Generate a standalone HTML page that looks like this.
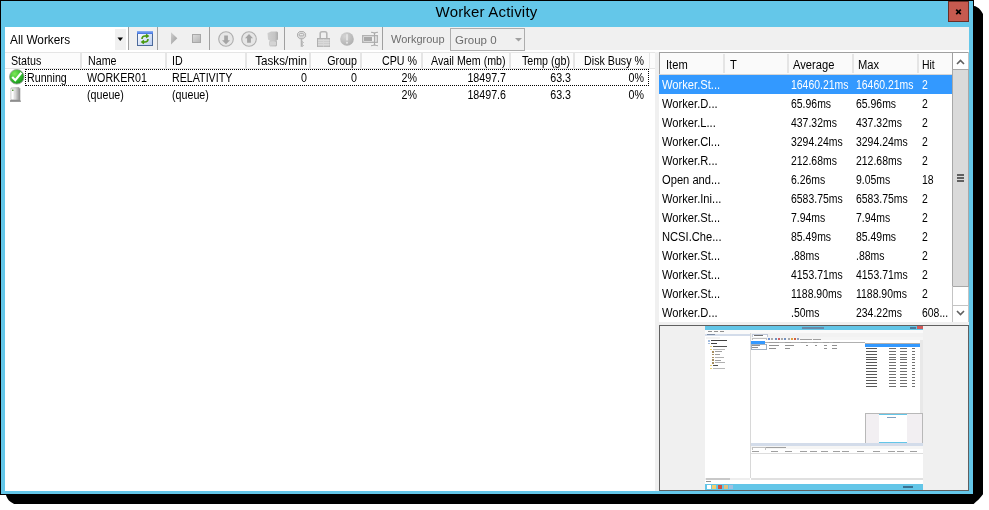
<!DOCTYPE html>
<html><head><meta charset="utf-8">
<style>
html,body{margin:0;padding:0;}
body{width:989px;height:510px;position:relative;overflow:hidden;background:#fff;font-family:"Liberation Sans",sans-serif;font-size:11px;color:#000;}
.a{position:absolute;}
.t{position:absolute;white-space:nowrap;line-height:14px;font-size:12px;transform:scaleX(0.89);transform-origin:0 0;filter:grayscale(1);}
.n{transform:none;}
.s{transform:scaleX(0.93);}
.m{transform:scaleX(0.87);}
.r{text-align:right;transform-origin:100% 0;}
#shadow{left:0;top:0;width:989px;height:510px;}
#win{left:0;top:0;width:972px;height:493px;border:1px solid #000;background:#64c7e9;}
#title{left:0;top:3px;width:973px;text-align:center;font-size:15px;line-height:17px;letter-spacing:0.2px;}
#close{left:948px;top:1px;width:19px;height:19px;background:#c65a4f;border:1px solid #6a2e26;}
#content{left:5px;top:27px;width:964px;height:464px;background:#f0f0f0;}
.sep{position:absolute;top:27px;width:1px;height:23px;background:#a0a0a0;}
.hdrL{position:absolute;top:52px;height:15px;background:#fcfcfc;border-top:1px solid #e5e5e5;border-bottom:1px solid #e5e5e5;}
.vdiv{position:absolute;width:2px;background:#e5e5e5;}
.row{position:absolute;left:659px;width:293px;height:19px;}
</style></head><body>
<svg class="a" id="shadow" width="989" height="510" viewBox="0 0 989 510">
  <path d="M973 5.8 L975.5 6.2 L978.8 8.3 L981 10.8 L983 14 L983 494.3 L980.8 497 L978.4 499.8 L976 501.7 L973.7 504 L14.1 504 L10.8 501.9 L8.9 500.5 L7.8 499 L6.6 496.7 L5.9 494.8 L6 490 L973 490 Z" fill="#000"/>
</svg>
<div class="a" id="win"></div>
<div class="t n" id="title">Worker Activity</div>
<div class="a" id="close"><svg width="19" height="19" viewBox="0 0 19 19" style="position:absolute;left:0;top:0"><path d="M7.2 7.6 L11.8 12.2 M11.8 7.6 L7.2 12.2" stroke="#000" stroke-width="1.7" fill="none"/></svg></div>
<div class="a" id="content"></div>

<!-- toolbar -->
<div class="a" style="left:5px;top:27px;width:123px;height:23px;background:#fff;"></div>
<div class="a" style="left:115px;top:29px;width:11px;height:21px;background:#f0f0f0;"></div>
<svg class="a" style="left:117px;top:37px" width="7" height="5"><path d="M0.5 0.5 L6 0.5 L3.25 4 Z" fill="#000"/></svg>
<div class="t" style="left:10px;top:33px;font-size:12px;line-height:14px;transform:scaleX(0.985);">All Workers</div>
<div class="sep" style="left:128px"></div>
<div class="sep" style="left:157px"></div>
<div class="sep" style="left:209px"></div>
<div class="sep" style="left:284px"></div>
<div class="sep" style="left:382px"></div>
<div class="a" style="left:5px;top:50px;width:964px;height:2px;background:#fff;"></div>

<!-- refresh icon -->
<svg class="a" style="left:137px;top:31px" width="16" height="15" viewBox="0 0 16 15">
  <defs><linearGradient id="rg" x1="0" y1="0" x2="1" y2="1"><stop offset="0" stop-color="#fff"/><stop offset="1" stop-color="#b9cdf2"/></linearGradient>
  <linearGradient id="tg" x1="0" y1="0" x2="0" y2="1"><stop offset="0" stop-color="#8fb4f5"/><stop offset="1" stop-color="#3d6fe0"/></linearGradient></defs>
  <rect x="0.5" y="0.5" width="15" height="14" fill="url(#rg)" stroke="#4d6a9a"/>
  <rect x="0" y="0" width="16" height="3" fill="url(#tg)"/>
  <path d="M5 8 A3 3 0 0 1 8 5 L10 5 M9 3.5 L11 5 L9 6.5 M11 8 A3 3 0 0 1 8 11 L6 11 M7 9.5 L5 11 L7 12.5" stroke="#4a9a10" stroke-width="1.6" fill="none"/>
</svg>
<!-- play -->
<svg class="a" style="left:170px;top:32px" width="9" height="13" viewBox="0 0 9 13"><defs><linearGradient id="pg" x1="0" y1="0" x2="1" y2="1"><stop offset="0" stop-color="#d0d0d0"/><stop offset="1" stop-color="#9a9a9a"/></linearGradient></defs><path d="M1 0.3 L7.3 6.3 L1 12.5 Z" fill="url(#pg)"/></svg>
<!-- stop -->
<svg class="a" style="left:192px;top:34px" width="9" height="9" viewBox="0 0 9 9"><defs><linearGradient id="stg" x1="0" y1="0" x2="1" y2="1"><stop offset="0" stop-color="#dcdcdc"/><stop offset="1" stop-color="#b4b4b4"/></linearGradient></defs><rect x="0.5" y="0.5" width="8" height="8" fill="url(#stg)" stroke="#a8a8a8"/></svg>
<!-- down circle -->
<svg class="a" style="left:218px;top:31px" width="16" height="16" viewBox="0 0 16 16"><circle cx="8" cy="8" r="7.3" fill="#e6e6e6" stroke="#aeaeae" stroke-width="1.1"/><path d="M6.2 4.6 L9.9 4.6 L9.9 9.2 L12 9.2 L8 13.2 L4 9.2 L6.2 9.2 Z" fill="#a4a4a4"/></svg>
<!-- up circle -->
<svg class="a" style="left:241px;top:31px" width="16" height="16" viewBox="0 0 16 16"><circle cx="8" cy="8" r="7.3" fill="#e6e6e6" stroke="#aeaeae" stroke-width="1.1"/><path d="M6.1 11.8 L9.9 11.8 L9.9 7.2 L12 7.2 L8 2.9 L4 7.2 L6.1 7.2 Z" fill="#a4a4a4"/></svg>
<!-- gray blob -->
<svg class="a" style="left:267px;top:31px" width="12" height="16" viewBox="0 0 12 16">
<defs><linearGradient id="bg1" x1="0" y1="0" x2="1" y2="0"><stop offset="0" stop-color="#cfcfcf"/><stop offset="0.7" stop-color="#c4c4c4"/><stop offset="1" stop-color="#a9a9a9"/></linearGradient></defs>
<path d="M4 0.5 L10 0.5 L11 1.5 L11 8.5 L9.5 9.5 L10 10.5 L10 14.5 L9 15.5 L3 15.5 L2 14 L2 11 L2.8 9.5 L1 8.5 L0.5 2 L2 1.5 Z" fill="url(#bg1)"/>
<path d="M3 11 Q6 9.5 9 11 L9 14 L3 14 Z" fill="#d4d4d4"/>
</svg>
<!-- key -->
<svg class="a" style="left:297px;top:31px" width="10" height="17" viewBox="0 0 10 17"><path d="M2.5 0.5 L6.5 0.5 L8.6 2.5 L8.6 5.5 L6.5 7.7 L2.5 7.7 L0.5 5.5 L0.5 2.5 Z" fill="#d8d8d8" stroke="#b0b0b0" stroke-width="1"/><rect x="2.3" y="2.6" width="4.4" height="2.2" rx="1" fill="#ececec" stroke="#a8a8a8" stroke-width="0.9"/><path d="M4.5 7.5 L4.5 15.8" stroke="#b4b4b4" stroke-width="1.6"/><path d="M5 10.5 L6.5 11.5 L5 12.5 M5 13.5 L6.5 14.5 L5 15.5" stroke="#b4b4b4" stroke-width="1" fill="none"/></svg>
<!-- lock -->
<svg class="a" style="left:317px;top:31px" width="13" height="16" viewBox="0 0 13 16"><path d="M3.2 7.5 L3.2 2.5 Q3.2 0.8 5 0.8 L8 0.8 Q9.8 0.8 9.8 2.5 L9.8 7.5" fill="none" stroke="#b6b6b6" stroke-width="1.6"/><rect x="0.5" y="7.5" width="12.5" height="8.3" fill="#cdcdcd" stroke="#b0b0b0" stroke-width="1"/><path d="M1 9.6 H12.5 M1 11.6 H12.5 M1 13.6 H12.5" stroke="#dcdcdc" stroke-width="0.9"/><path d="M6.5 8 V15.5" stroke="#d8d8d8" stroke-width="0.8"/></svg>
<!-- exclamation -->
<svg class="a" style="left:340px;top:32px" width="14" height="14" viewBox="0 0 14 14"><defs><radialGradient id="eg" cx="0.35" cy="0.3" r="0.8"><stop offset="0" stop-color="#d4d4d4"/><stop offset="1" stop-color="#adadad"/></radialGradient></defs><circle cx="7" cy="7" r="6.8" fill="url(#eg)"/><rect x="6" y="2.2" width="2" height="6.3" fill="#e2e2e2"/><rect x="6" y="9.8" width="2" height="1.8" fill="#e2e2e2"/></svg>
<!-- rename -->
<svg class="a" style="left:361px;top:31px" width="18" height="16" viewBox="0 0 18 16">
<rect x="1.7" y="4.7" width="14.6" height="6.6" fill="none" stroke="#b2b2b2" stroke-width="1.4"/>
<rect x="3" y="6" width="8" height="4" fill="#a9a9a9"/>
<rect x="14" y="5.5" width="1.6" height="5" fill="#dedede"/>
<path d="M13.5 1.2 L13.5 14.8 M10 1.3 Q12.5 1.3 13.5 2.5 Q14.5 1.3 17 1.3 M10 14.7 Q12.5 14.7 13.5 13.5 Q14.5 14.7 17 14.7" stroke="#aaaaaa" stroke-width="1.1" fill="none"/>
</svg>

<div class="t n" style="left:391px;top:33px;font-size:11px;line-height:13px;color:#6d6d6d;">Workgroup</div>
<div class="a" style="left:450px;top:28px;width:73px;height:21px;border:1px solid #adadad;background:#f0f0f0;"></div>
<div class="t n" style="left:455px;top:33px;font-size:11.5px;line-height:14px;color:#6d6d6d;">Group 0</div>
<svg class="a" style="left:515px;top:38px" width="7" height="4"><path d="M0 0 L7 0 L3.5 3.5 Z" fill="#a0a0a0"/></svg>

<!-- left list -->
<div class="a" style="left:5px;top:52px;width:650px;height:439px;background:#fff;"></div>
<div class="hdrL" style="left:5px;width:644px;border-right:1px solid #e5e5e5;"></div>
<div class="hdrL" style="left:650px;width:5px;"></div>
<div class="vdiv" style="left:80px;top:53px;height:15px"></div>
<div class="vdiv" style="left:165px;top:53px;height:15px"></div>
<div class="vdiv" style="left:245px;top:53px;height:15px"></div>
<div class="vdiv" style="left:309px;top:53px;height:15px"></div>
<div class="vdiv" style="left:360px;top:53px;height:15px"></div>
<div class="vdiv" style="left:421px;top:53px;height:15px"></div>
<div class="vdiv" style="left:509px;top:53px;height:15px"></div>
<div class="vdiv" style="left:573px;top:53px;height:15px"></div>

<div class="t" style="left:11px;top:54px">Status</div>
<div class="t" style="left:88px;top:54px">Name</div>
<div class="t" style="left:172px;top:54px">ID</div>
<div class="t r" style="left:246px;width:61px;top:54px;transform:scaleX(0.97)">Tasks/min</div>
<div class="t r" style="left:310px;width:47px;top:54px">Group</div>
<div class="t r" style="left:361px;width:56px;top:54px">CPU %</div>
<div class="t r" style="left:422px;width:82px;top:54px">Avail Mem (mb)</div>
<div class="t r" style="left:510px;width:60px;top:54px">Temp (gb)</div>
<div class="t r" style="left:574px;width:70px;top:54px">Disk Busy %</div>

<div class="a" style="left:25px;top:69px;width:622px;height:15px;border:1px dotted #000;"></div>
<!-- check icon -->
<svg class="a" style="left:9px;top:69px" width="16" height="16" viewBox="0 0 16 16">
  <defs><radialGradient id="cg" cx="0.35" cy="0.3" r="0.8"><stop offset="0" stop-color="#7ee85a"/><stop offset="0.6" stop-color="#2fb52a"/><stop offset="1" stop-color="#14881a"/></radialGradient></defs>
  <circle cx="7.8" cy="7.8" r="7.3" fill="url(#cg)" stroke="#9a9a9a" stroke-width="0.8"/>
  <path d="M3.2 8 L6.3 11.2 L12.4 3.8" stroke="#fff" stroke-width="2.2" fill="none"/>
</svg>
<div class="t" style="left:27px;top:71px">Running</div>
<div class="t" style="left:87px;top:71px">WORKER01</div>
<div class="t" style="left:172px;top:71px">RELATIVITY</div>
<div class="t r" style="left:246px;width:61px;top:71px">0</div>
<div class="t r" style="left:310px;width:47px;top:71px">0</div>
<div class="t r" style="left:361px;width:56px;top:71px">2%</div>
<div class="t r" style="left:422px;width:84px;top:71px">18497.7</div>
<div class="t r" style="left:510px;width:61px;top:71px">63.3</div>
<div class="t r" style="left:574px;width:70px;top:71px">0%</div>
<!-- server icon -->
<svg class="a" style="left:9px;top:87px" width="13" height="15" viewBox="0 0 13 15">
  <defs><linearGradient id="sg" x1="0" y1="0" x2="1" y2="0"><stop offset="0" stop-color="#f8f8f8"/><stop offset="0.5" stop-color="#d8d8d8"/><stop offset="1" stop-color="#8a8a8a"/></linearGradient></defs>
  <path d="M2 1 L10 0.5 L11 1.5 L11 13 L2 13 Z" fill="url(#sg)" stroke="#9a9a9a" stroke-width="0.6"/>
  <rect x="2.5" y="2" width="2" height="10" fill="#fff"/>
  <rect x="3" y="2.5" width="1.5" height="1.5" fill="#5a9a3a"/>
  <path d="M1 13.5 L11.5 13.5 L12 14.5 L1 14.5 Z" fill="#3a3a3a"/>
</svg>
<div class="t" style="left:87px;top:88px">(queue)</div>
<div class="t" style="left:172px;top:88px">(queue)</div>
<div class="t r" style="left:361px;width:56px;top:88px">2%</div>
<div class="t r" style="left:422px;width:84px;top:88px">18497.6</div>
<div class="t r" style="left:510px;width:61px;top:88px">63.3</div>
<div class="t r" style="left:574px;width:70px;top:88px">0%</div>

<!-- right list -->
<div class="a" style="left:659px;top:52px;width:310px;height:270px;background:#fff;"></div>
<div class="a" style="left:659px;top:52px;width:293px;height:21px;background:#fafafa;border-top:1px solid #a0a0a0;border-bottom:1px solid #d5d5d5;"></div>
<div class="a" style="left:659px;top:52px;width:1px;height:22px;background:#a0a0a0;"></div>
<div class="a" style="left:952px;top:52px;width:1px;height:22px;background:#a0a0a0;"></div>
<div class="a" style="left:953px;top:52px;width:16px;height:1px;background:#a0a0a0;"></div>
<div class="vdiv" style="left:723px;top:54px;height:19px;width:2px"></div>
<div class="vdiv" style="left:787px;top:54px;height:19px;width:2px"></div>
<div class="vdiv" style="left:852px;top:54px;height:19px;width:2px"></div>
<div class="vdiv" style="left:917px;top:54px;height:19px;width:2px"></div>
<div class="t s" style="left:666px;top:58px">Item</div>
<div class="t s" style="left:730px;top:58px">T</div>
<div class="t s" style="left:793px;top:58px">Average</div>
<div class="t s" style="left:858px;top:58px">Max</div>
<div class="t m" style="left:922px;top:58px">Hit</div>

<div class="a" style="left:659px;top:75px;width:293px;height:19px;background:#3399ff;"></div>
<div id="rows">
<div class="t s" style="left:662px;top:78px; color:#fff;">Worker.St...</div>
<div class="t m" style="left:791px;top:78px; color:#fff;">16460.21ms</div>
<div class="t m" style="left:856px;top:78px; color:#fff;">16460.21ms</div>
<div class="t m" style="left:922px;top:78px; color:#fff;">2</div>
<div class="t s" style="left:662px;top:97px;">Worker.D...</div>
<div class="t m" style="left:791px;top:97px;">65.96ms</div>
<div class="t m" style="left:856px;top:97px;">65.96ms</div>
<div class="t m" style="left:922px;top:97px;">2</div>
<div class="t s" style="left:662px;top:116px;">Worker.L...</div>
<div class="t m" style="left:791px;top:116px;">437.32ms</div>
<div class="t m" style="left:856px;top:116px;">437.32ms</div>
<div class="t m" style="left:922px;top:116px;">2</div>
<div class="t s" style="left:662px;top:135px;">Worker.Cl...</div>
<div class="t m" style="left:791px;top:135px;">3294.24ms</div>
<div class="t m" style="left:856px;top:135px;">3294.24ms</div>
<div class="t m" style="left:922px;top:135px;">2</div>
<div class="t s" style="left:662px;top:154px;">Worker.R...</div>
<div class="t m" style="left:791px;top:154px;">212.68ms</div>
<div class="t m" style="left:856px;top:154px;">212.68ms</div>
<div class="t m" style="left:922px;top:154px;">2</div>
<div class="t s" style="left:662px;top:173px;">Open and...</div>
<div class="t m" style="left:791px;top:173px;">6.26ms</div>
<div class="t m" style="left:856px;top:173px;">9.05ms</div>
<div class="t m" style="left:922px;top:173px;">18</div>
<div class="t s" style="left:662px;top:192px;">Worker.Ini...</div>
<div class="t m" style="left:791px;top:192px;">6583.75ms</div>
<div class="t m" style="left:856px;top:192px;">6583.75ms</div>
<div class="t m" style="left:922px;top:192px;">2</div>
<div class="t s" style="left:662px;top:211px;">Worker.St...</div>
<div class="t m" style="left:791px;top:211px;">7.94ms</div>
<div class="t m" style="left:856px;top:211px;">7.94ms</div>
<div class="t m" style="left:922px;top:211px;">2</div>
<div class="t s" style="left:662px;top:230px;">NCSI.Che...</div>
<div class="t m" style="left:791px;top:230px;">85.49ms</div>
<div class="t m" style="left:856px;top:230px;">85.49ms</div>
<div class="t m" style="left:922px;top:230px;">2</div>
<div class="t s" style="left:662px;top:249px;">Worker.St...</div>
<div class="t m" style="left:791px;top:249px;">.88ms</div>
<div class="t m" style="left:856px;top:249px;">.88ms</div>
<div class="t m" style="left:922px;top:249px;">2</div>
<div class="t s" style="left:662px;top:268px;">Worker.St...</div>
<div class="t m" style="left:791px;top:268px;">4153.71ms</div>
<div class="t m" style="left:856px;top:268px;">4153.71ms</div>
<div class="t m" style="left:922px;top:268px;">2</div>
<div class="t s" style="left:662px;top:287px;">Worker.St...</div>
<div class="t m" style="left:791px;top:287px;">1188.90ms</div>
<div class="t m" style="left:856px;top:287px;">1188.90ms</div>
<div class="t m" style="left:922px;top:287px;">2</div>
<div class="t s" style="left:662px;top:306px;">Worker.D...</div>
<div class="t m" style="left:791px;top:306px;">.50ms</div>
<div class="t m" style="left:856px;top:306px;">234.22ms</div>
<div class="t m" style="left:922px;top:306px;">608...</div>
</div>

<!-- scrollbar -->
<div class="a" style="left:968px;top:52px;width:1px;height:270px;background:#c4c4c4;"></div>
<div class="a" style="left:952px;top:69px;width:15px;height:216px;background:#dadada;border:1px solid #a8a8a8;"></div>
<svg class="a" style="left:956px;top:59px" width="9" height="6"><path d="M1 5 L4.5 1.5 L8 5" stroke="#606060" stroke-width="1.6" fill="none"/></svg>
<div class="a" style="left:957px;top:174px;width:7px;height:2px;background:#606060;"></div>
<div class="a" style="left:957px;top:177px;width:7px;height:2px;background:#606060;"></div>
<div class="a" style="left:957px;top:180px;width:7px;height:2px;background:#606060;"></div>
<div class="a" style="left:952px;top:305px;width:17px;height:1px;background:#c4c4c4;"></div>
<div class="a" style="left:952px;top:286px;width:1px;height:36px;background:#c4c4c4;"></div>
<svg class="a" style="left:956px;top:310px" width="9" height="6"><path d="M1 1 L4.5 4.5 L8 1" stroke="#606060" stroke-width="1.6" fill="none"/></svg>

<!-- thumbnail panel -->
<div class="a" style="left:659px;top:325px;width:308px;height:164px;border:1px solid #606060;background:#f0f0f0;"></div>
<div id="thumb" class="a" style="left:705px;top:326px;width:218px;height:164px;background:#fff;overflow:hidden;">
<div class="a" style="left:0px;top:0px;width:218px;height:4px;background:#63c6e8;"></div>
<div class="a" style="left:97px;top:1px;width:22px;height:2px;background:#6a8aa8;"></div>
<div class="a" style="left:205px;top:1px;width:6px;height:2px;background:#4a7898;"></div>
<div class="a" style="left:212px;top:0.3px;width:6px;height:3.2px;background:#d05a5a;"></div>
<div class="a" style="left:0px;top:4px;width:218px;height:4px;background:#fafafa;"></div>
<div class="a" style="left:3px;top:5px;width:4px;height:1px;background:#909090;"></div>
<div class="a" style="left:9px;top:5px;width:4px;height:1px;background:#909090;"></div>
<div class="a" style="left:15px;top:5px;width:4px;height:1px;background:#909090;"></div>
<div class="a" style="left:0px;top:7.5px;width:45px;height:2px;background:#d3dcea;"></div>
<div class="a" style="left:2px;top:8px;width:8px;height:1px;background:#8090a8;"></div>
<div class="a" style="left:0px;top:9.5px;width:45px;height:143px;background:#fff;"></div>
<div class="a" style="left:1px;top:10.5px;width:14px;height:2px;background:#f3f3f3;"></div>
<div class="a" style="left:3.3px;top:14.0px;width:1.6px;height:1.6px;background:#7aa0d0;opacity:.7;"></div>
<div class="a" style="left:5.5px;top:14.2px;width:16px;height:1.2px;background:#404040;"></div>
<div class="a" style="left:3.3px;top:16.8px;width:1.6px;height:1.6px;background:#7aa0d0;opacity:.7;"></div>
<div class="a" style="left:5.5px;top:17px;width:6px;height:1.2px;background:#404040;"></div>
<div class="a" style="left:5.3px;top:19.8px;width:1.6px;height:1.6px;background:#e0c040;opacity:.7;"></div>
<div class="a" style="left:7.5px;top:20px;width:14px;height:1.2px;background:#505050;"></div>
<div class="a" style="left:5.3px;top:22.5px;width:1.6px;height:1.6px;background:#e0c040;opacity:.7;"></div>
<div class="a" style="left:7.5px;top:22.7px;width:12px;height:1.2px;background:#b8b8b8;"></div>
<div class="a" style="left:7.3px;top:25.1px;width:1.6px;height:1.6px;background:#806020;opacity:.7;"></div>
<div class="a" style="left:9.5px;top:25.3px;width:7px;height:1.2px;background:#a0a0a0;"></div>
<div class="a" style="left:7.3px;top:27.8px;width:1.6px;height:1.6px;background:#806020;opacity:.7;"></div>
<div class="a" style="left:9.5px;top:28px;width:5px;height:1.2px;background:#a0a0a0;"></div>
<div class="a" style="left:7.3px;top:30.6px;width:1.6px;height:1.6px;background:#806020;opacity:.7;"></div>
<div class="a" style="left:9.5px;top:30.8px;width:9px;height:1.2px;background:#b0b0b0;"></div>
<div class="a" style="left:7.3px;top:33.3px;width:1.6px;height:1.6px;background:#806020;opacity:.7;"></div>
<div class="a" style="left:9.5px;top:33.5px;width:6px;height:1.2px;background:#a0a0a0;"></div>
<div class="a" style="left:7.3px;top:36.0px;width:1.6px;height:1.6px;background:#806020;opacity:.7;"></div>
<div class="a" style="left:9.5px;top:36.2px;width:10px;height:1.2px;background:#b0b0b0;"></div>
<div class="a" style="left:5.3px;top:38.8px;width:1.6px;height:1.6px;background:#e0c040;opacity:.7;"></div>
<div class="a" style="left:7.5px;top:39px;width:5px;height:1.2px;background:#505050;"></div>
<div class="a" style="left:5.3px;top:41.5px;width:1.6px;height:1.6px;background:#e0c040;opacity:.7;"></div>
<div class="a" style="left:7.5px;top:41.7px;width:12px;height:1.2px;background:#b8b8b8;"></div>
<div class="a" style="left:45px;top:7px;width:1px;height:145px;background:#d8d8d8;"></div>
<div class="a" style="left:46px;top:7px;width:172px;height:4px;background:#f2f2f2;"></div>
<div class="a" style="left:47px;top:7.5px;width:14px;height:3.5px;background:#fff;border:0.5px solid #c0c8d8;"></div>
<div class="a" style="left:49px;top:8.5px;width:9px;height:1px;background:#707070;"></div>
<div class="a" style="left:46px;top:11px;width:172px;height:3px;background:#f5f5f5;"></div>
<div class="a" style="left:47px;top:11.5px;width:13px;height:2.5px;background:#fff;border:0.5px solid #c0c0c0;"></div>
<div class="a" style="left:63px;top:12px;width:2px;height:2px;background:#6a8fd0;"></div>
<div class="a" style="left:66px;top:12px;width:2px;height:2px;background:#aaa;"></div>
<div class="a" style="left:70px;top:12px;width:2px;height:2px;background:#7090c0;"></div>
<div class="a" style="left:73px;top:12px;width:2px;height:2px;background:#d06060;"></div>
<div class="a" style="left:76px;top:12px;width:2px;height:2px;background:#aaa;"></div>
<div class="a" style="left:79px;top:12px;width:2px;height:2px;background:#7090c0;"></div>
<div class="a" style="left:83px;top:12px;width:2px;height:2px;background:#aaa;"></div>
<div class="a" style="left:86px;top:12px;width:2px;height:2px;background:#e0a040;"></div>
<div class="a" style="left:89px;top:12px;width:2px;height:2px;background:#d06040;"></div>
<div class="a" style="left:92px;top:12px;width:2px;height:2px;background:#90a0c0;"></div>
<div class="a" style="left:95px;top:12.5px;width:12px;height:1px;background:#a0a0a0;"></div>
<div class="a" style="left:108px;top:12.5px;width:8px;height:1px;background:#a0a0a0;"></div>
<div class="a" style="left:46px;top:14px;width:114px;height:73px;background:#fff;"></div>
<div class="a" style="left:46px;top:15.3px;width:14px;height:2.4px;background:#3399ff;"></div>
<div class="a" style="left:46px;top:17.7px;width:14px;height:4.5px;background:#fff;border:0.5px solid #a0b0c0;"></div>
<div class="a" style="left:47px;top:18.8px;width:8px;height:0.8px;background:#909090;"></div>
<div class="a" style="left:47px;top:20.8px;width:6px;height:0.8px;background:#909090;"></div>
<div class="a" style="left:60px;top:16px;width:100px;height:0.8px;background:#b0b0b0;"></div>
<div class="a" style="left:64px;top:16px;width:10px;height:0.8px;background:#a0a0a0;"></div>
<div class="a" style="left:80px;top:16px;width:6px;height:0.8px;background:#a0a0a0;"></div>
<div class="a" style="left:96px;top:16px;width:6px;height:0.8px;background:#a0a0a0;"></div>
<div class="a" style="left:108px;top:16px;width:5px;height:0.8px;background:#a0a0a0;"></div>
<div class="a" style="left:118px;top:16px;width:6px;height:0.8px;background:#a0a0a0;"></div>
<div class="a" style="left:128px;top:16px;width:7px;height:0.8px;background:#a0a0a0;"></div>
<div class="a" style="left:64px;top:19px;width:10px;height:1px;background:#909090;"></div>
<div class="a" style="left:80px;top:19px;width:9px;height:1px;background:#909090;"></div>
<div class="a" style="left:101px;top:19px;width:2px;height:1px;background:#909090;"></div>
<div class="a" style="left:110px;top:19px;width:2px;height:1px;background:#909090;"></div>
<div class="a" style="left:119px;top:19px;width:3px;height:1px;background:#909090;"></div>
<div class="a" style="left:127px;top:19px;width:5px;height:1px;background:#909090;"></div>
<div class="a" style="left:64px;top:22px;width:7px;height:1px;background:#909090;"></div>
<div class="a" style="left:80px;top:22px;width:5px;height:1px;background:#909090;"></div>
<div class="a" style="left:119px;top:22px;width:3px;height:1px;background:#909090;"></div>
<div class="a" style="left:127px;top:22px;width:5px;height:1px;background:#909090;"></div>
<div class="a" style="left:160px;top:14px;width:58px;height:73px;background:#fff;"></div>
<div class="a" style="left:160px;top:16.5px;width:55px;height:0.8px;background:#b0b0b0;"></div>
<div class="a" style="left:160px;top:18px;width:55px;height:3px;background:#3399ff;"></div>
<div class="a" style="left:160.5px;top:21.8px;width:11.5px;height:1.1px;background:#585858;"></div>
<div class="a" style="left:184px;top:21.8px;width:7px;height:1.1px;background:#707070;"></div>
<div class="a" style="left:195px;top:21.8px;width:6.5px;height:1.1px;background:#707070;"></div>
<div class="a" style="left:207px;top:21.8px;width:2.5px;height:1.1px;background:#707070;"></div>
<div class="a" style="left:160.5px;top:24.7px;width:11.5px;height:1.1px;background:#585858;"></div>
<div class="a" style="left:184px;top:24.7px;width:7px;height:1.1px;background:#707070;"></div>
<div class="a" style="left:195px;top:24.7px;width:6.5px;height:1.1px;background:#707070;"></div>
<div class="a" style="left:207px;top:24.7px;width:2.5px;height:1.1px;background:#707070;"></div>
<div class="a" style="left:160.5px;top:27.6px;width:11.5px;height:1.1px;background:#585858;"></div>
<div class="a" style="left:184px;top:27.6px;width:7px;height:1.1px;background:#707070;"></div>
<div class="a" style="left:195px;top:27.6px;width:6.5px;height:1.1px;background:#707070;"></div>
<div class="a" style="left:207px;top:27.6px;width:2.5px;height:1.1px;background:#707070;"></div>
<div class="a" style="left:160.5px;top:30.5px;width:11.5px;height:1.1px;background:#585858;"></div>
<div class="a" style="left:184px;top:30.5px;width:7px;height:1.1px;background:#707070;"></div>
<div class="a" style="left:195px;top:30.5px;width:6.5px;height:1.1px;background:#707070;"></div>
<div class="a" style="left:207px;top:30.5px;width:2.5px;height:1.1px;background:#707070;"></div>
<div class="a" style="left:160.5px;top:33.4px;width:11.5px;height:1.1px;background:#585858;"></div>
<div class="a" style="left:184px;top:33.4px;width:7px;height:1.1px;background:#707070;"></div>
<div class="a" style="left:195px;top:33.4px;width:6.5px;height:1.1px;background:#707070;"></div>
<div class="a" style="left:207px;top:33.4px;width:2.5px;height:1.1px;background:#707070;"></div>
<div class="a" style="left:160.5px;top:36.3px;width:11.5px;height:1.1px;background:#585858;"></div>
<div class="a" style="left:184px;top:36.3px;width:7px;height:1.1px;background:#707070;"></div>
<div class="a" style="left:195px;top:36.3px;width:6.5px;height:1.1px;background:#707070;"></div>
<div class="a" style="left:207px;top:36.3px;width:2.5px;height:1.1px;background:#707070;"></div>
<div class="a" style="left:160.5px;top:39.2px;width:11.5px;height:1.1px;background:#585858;"></div>
<div class="a" style="left:184px;top:39.2px;width:7px;height:1.1px;background:#707070;"></div>
<div class="a" style="left:195px;top:39.2px;width:6.5px;height:1.1px;background:#707070;"></div>
<div class="a" style="left:207px;top:39.2px;width:2.5px;height:1.1px;background:#707070;"></div>
<div class="a" style="left:160.5px;top:42.1px;width:11.5px;height:1.1px;background:#585858;"></div>
<div class="a" style="left:184px;top:42.1px;width:7px;height:1.1px;background:#707070;"></div>
<div class="a" style="left:195px;top:42.1px;width:6.5px;height:1.1px;background:#707070;"></div>
<div class="a" style="left:207px;top:42.1px;width:2.5px;height:1.1px;background:#707070;"></div>
<div class="a" style="left:160.5px;top:45.0px;width:11.5px;height:1.1px;background:#585858;"></div>
<div class="a" style="left:184px;top:45.0px;width:7px;height:1.1px;background:#707070;"></div>
<div class="a" style="left:195px;top:45.0px;width:6.5px;height:1.1px;background:#707070;"></div>
<div class="a" style="left:207px;top:45.0px;width:2.5px;height:1.1px;background:#707070;"></div>
<div class="a" style="left:160.5px;top:47.9px;width:11.5px;height:1.1px;background:#585858;"></div>
<div class="a" style="left:184px;top:47.9px;width:7px;height:1.1px;background:#707070;"></div>
<div class="a" style="left:195px;top:47.9px;width:6.5px;height:1.1px;background:#707070;"></div>
<div class="a" style="left:207px;top:47.9px;width:2.5px;height:1.1px;background:#707070;"></div>
<div class="a" style="left:160.5px;top:50.8px;width:11.5px;height:1.1px;background:#585858;"></div>
<div class="a" style="left:184px;top:50.8px;width:7px;height:1.1px;background:#707070;"></div>
<div class="a" style="left:195px;top:50.8px;width:6.5px;height:1.1px;background:#707070;"></div>
<div class="a" style="left:207px;top:50.8px;width:2.5px;height:1.1px;background:#707070;"></div>
<div class="a" style="left:160.5px;top:53.7px;width:11.5px;height:1.1px;background:#585858;"></div>
<div class="a" style="left:184px;top:53.7px;width:7px;height:1.1px;background:#707070;"></div>
<div class="a" style="left:195px;top:53.7px;width:6.5px;height:1.1px;background:#707070;"></div>
<div class="a" style="left:207px;top:53.7px;width:2.5px;height:1.1px;background:#707070;"></div>
<div class="a" style="left:160.5px;top:56.599999999999994px;width:11.5px;height:1.1px;background:#585858;"></div>
<div class="a" style="left:184px;top:56.599999999999994px;width:7px;height:1.1px;background:#707070;"></div>
<div class="a" style="left:195px;top:56.599999999999994px;width:6.5px;height:1.1px;background:#707070;"></div>
<div class="a" style="left:207px;top:56.599999999999994px;width:2.5px;height:1.1px;background:#707070;"></div>
<div class="a" style="left:160.5px;top:59.5px;width:11.5px;height:1.1px;background:#585858;"></div>
<div class="a" style="left:184px;top:59.5px;width:7px;height:1.1px;background:#707070;"></div>
<div class="a" style="left:195px;top:59.5px;width:6.5px;height:1.1px;background:#707070;"></div>
<div class="a" style="left:207px;top:59.5px;width:2.5px;height:1.1px;background:#707070;"></div>
<div class="a" style="left:215px;top:14px;width:3px;height:73px;background:#e8e8e8;"></div>
<div class="a" style="left:160px;top:87px;width:56px;height:30px;background:#f2eff2;border:0.5px solid #b8b8b8;"></div>
<div class="a" style="left:174px;top:87.5px;width:28px;height:29px;background:#fff;"></div>
<div class="a" style="left:174px;top:87.5px;width:28px;height:1px;background:#63c6e8;"></div>
<div class="a" style="left:174px;top:116px;width:28px;height:1px;background:#63c6e8;"></div>
<div class="a" style="left:182px;top:90.5px;width:9px;height:1px;background:#80a0c0;"></div>
<div class="a" style="left:46px;top:117px;width:172px;height:3px;background:#d3dcea;"></div>
<div class="a" style="left:46px;top:120px;width:172px;height:3px;background:#f5f5f5;"></div>
<div class="a" style="left:47px;top:120.5px;width:12px;height:2px;background:#fff;border:0.5px solid #c0c0c0;"></div>
<div class="a" style="left:61px;top:121px;width:20px;height:1px;background:#a0a0a0;"></div>
<div class="a" style="left:46px;top:124px;width:172px;height:3px;background:#fff;border-bottom:0.5px solid #ddd;"></div>
<div class="a" style="left:47px;top:125px;width:7px;height:0.8px;background:#a0a0a0;"></div>
<div class="a" style="left:66px;top:125px;width:7px;height:0.8px;background:#a0a0a0;"></div>
<div class="a" style="left:80px;top:125px;width:7px;height:0.8px;background:#a0a0a0;"></div>
<div class="a" style="left:95px;top:125px;width:7px;height:0.8px;background:#a0a0a0;"></div>
<div class="a" style="left:105px;top:125px;width:7px;height:0.8px;background:#a0a0a0;"></div>
<div class="a" style="left:116px;top:125px;width:7px;height:0.8px;background:#a0a0a0;"></div>
<div class="a" style="left:128px;top:125px;width:7px;height:0.8px;background:#a0a0a0;"></div>
<div class="a" style="left:137px;top:125px;width:7px;height:0.8px;background:#a0a0a0;"></div>
<div class="a" style="left:152px;top:125px;width:7px;height:0.8px;background:#a0a0a0;"></div>
<div class="a" style="left:168px;top:125px;width:7px;height:0.8px;background:#a0a0a0;"></div>
<div class="a" style="left:183px;top:125px;width:7px;height:0.8px;background:#a0a0a0;"></div>
<div class="a" style="left:192px;top:125px;width:7px;height:0.8px;background:#a0a0a0;"></div>
<div class="a" style="left:205px;top:125px;width:7px;height:0.8px;background:#a0a0a0;"></div>
<div class="a" style="left:46px;top:127.5px;width:172px;height:24.5px;background:#fff;"></div>
<div class="a" style="left:46px;top:152px;width:172px;height:2px;background:#e0e0e0;"></div>
<div class="a" style="left:0px;top:151.5px;width:45px;height:2.5px;background:#eee;"></div>
<div class="a" style="left:1px;top:152px;width:24px;height:1.5px;background:#c8c8c8;"></div>
<div class="a" style="left:0px;top:154px;width:218px;height:4px;background:#fff;"></div>
<div class="a" style="left:1px;top:155px;width:5px;height:1px;background:#909090;"></div>
<div class="a" style="left:0px;top:158px;width:218px;height:6px;background:#63c6e8;"></div>
<div class="a" style="left:2px;top:159px;width:4px;height:4px;background:#fff;"></div>
<div class="a" style="left:7px;top:159px;width:4px;height:4px;background:#f0d070;"></div>
<div class="a" style="left:13px;top:159px;width:4px;height:4px;background:#d05040;"></div>
<div class="a" style="left:19px;top:159px;width:4px;height:4px;background:#e0c080;"></div>
<div class="a" style="left:24px;top:159px;width:4px;height:4px;background:#a0c0e0;"></div>
<div class="a" style="left:198px;top:160px;width:10px;height:2px;background:#3a7090;"></div>
</div><!--/thumb-->

</body></html>
